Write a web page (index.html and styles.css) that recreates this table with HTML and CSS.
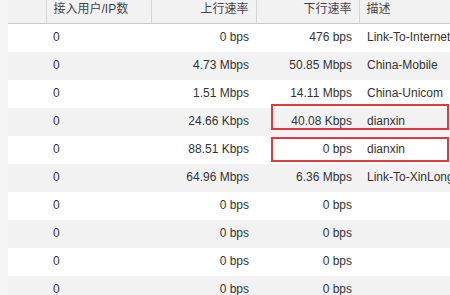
FILE: index.html
```html
<!DOCTYPE html>
<html>
<head>
<meta charset="utf-8">
<link rel="stylesheet" href="styles.css">
</head>
<body>
<div class="wrap">
  <table class="grid">
    <colgroup>
      <col class="c-chk"><col class="c-users"><col class="c-up"><col class="c-down"><col class="c-desc">
    </colgroup>
    <thead>
      <tr>
        <th></th>
        <th class="l">接入用户/IP数</th>
        <th class="r">上行速率</th>
        <th class="r">下行速率</th>
        <th class="l">描述</th>
      </tr>
    </thead>
    <tbody>
      <tr><td></td><td>0</td><td class="r">0 bps</td><td class="r">476 bps</td><td>Link-To-Internet</td></tr>
      <tr><td></td><td>0</td><td class="r">4.73 Mbps</td><td class="r">50.85 Mbps</td><td>China-Mobile</td></tr>
      <tr><td></td><td>0</td><td class="r">1.51 Mbps</td><td class="r">14.11 Mbps</td><td>China-Unicom</td></tr>
      <tr><td></td><td>0</td><td class="r">24.66 Kbps</td><td class="r">40.08 Kbps</td><td>dianxin</td></tr>
      <tr><td></td><td>0</td><td class="r">88.51 Kbps</td><td class="r">0 bps</td><td>dianxin</td></tr>
      <tr><td></td><td>0</td><td class="r">64.96 Mbps</td><td class="r">6.36 Mbps</td><td>Link-To-XinLong</td></tr>
      <tr><td></td><td>0</td><td class="r">0 bps</td><td class="r">0 bps</td><td></td></tr>
      <tr><td></td><td>0</td><td class="r">0 bps</td><td class="r">0 bps</td><td></td></tr>
      <tr><td></td><td>0</td><td class="r">0 bps</td><td class="r">0 bps</td><td></td></tr>
      <tr><td></td><td>0</td><td class="r">0 bps</td><td class="r">0 bps</td><td></td></tr>
    </tbody>
  </table>
  <div class="mark mark-1"></div>
  <div class="mark mark-2"></div>
</div>
</body>
</html>
```

FILE: styles.css
```css
html, body {
  margin: 0;
  padding: 0;
  overflow: hidden;
  background: #f5f5f5;
}
body {
  padding-left: 8px;
  font-family: "Liberation Sans", Arial, "Noto Sans CJK SC", sans-serif;
  font-size: 12px;
  color: #333;
}
.wrap {
  position: relative;
  width: 520px;
}
.grid {
  border-collapse: collapse;
  table-layout: fixed;
  width: 520px;
}
.c-chk { width: 38px; }
.c-users { width: 105px; }
.c-up { width: 105px; }
.c-down { width: 103px; }
.grid th {
  height: 23px;
  padding: 0 7px 5px;
  line-height: 18px;
  font-weight: normal;
  background: #f2f2f2;
  border-bottom: 1px solid #c9c9c9;
  border-right: 1px solid #d6d6d6;
  color: #444;
  white-space: nowrap;
  box-sizing: border-box;
}
.grid th:last-child { border-right: none; }
.grid td {
  height: 28px;
  padding: 0 7px 2px;
  box-sizing: border-box;
  white-space: nowrap;
  overflow: hidden;
  background: #fff;
}
.grid tbody tr:nth-child(even) td { background: #f2f2f2; }
.grid td:last-child { padding-left: 8px; }
.l { text-align: left; }
.r { text-align: right; }
.mark {
  position: absolute;
  left: 263px;
  width: 178px;
  border: 2px solid #e4393c;
  box-sizing: border-box;
}
.mark-1 { top: 104px; height: 26px; }
.mark-2 { top: 137px; height: 25px; }
```
